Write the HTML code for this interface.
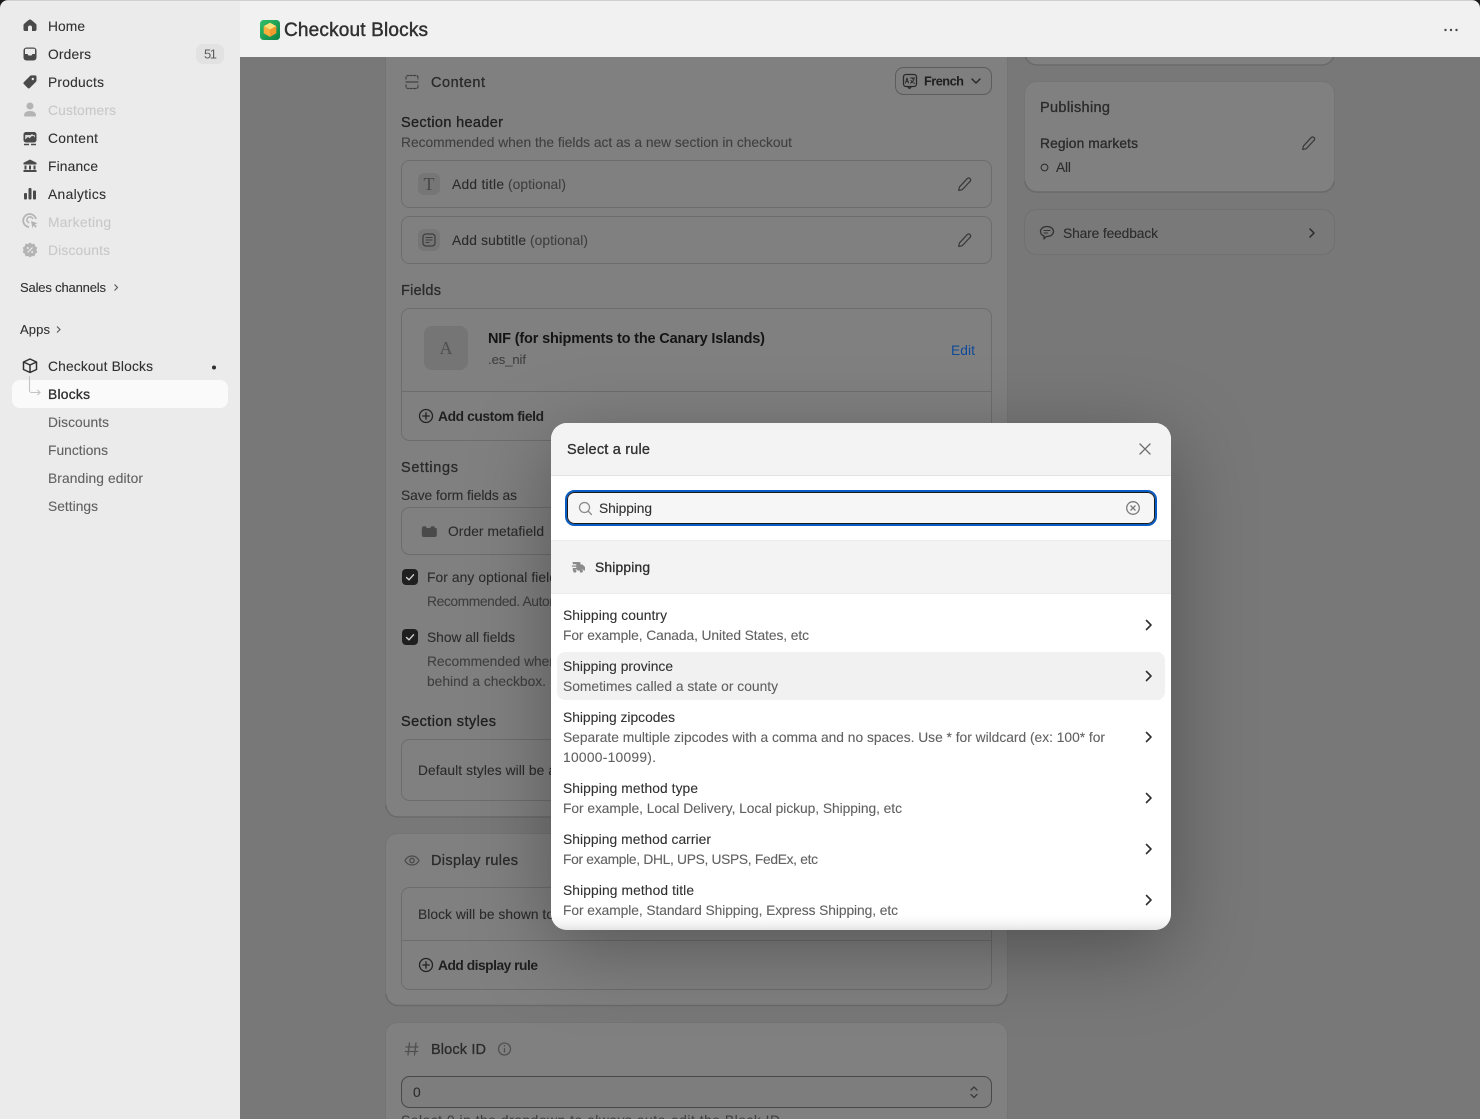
<!DOCTYPE html>
<html><head><meta charset="utf-8"><title>Checkout Blocks</title>
<style>
html,body{margin:0;padding:0;background:#787878;width:1480px;height:1119px;overflow:hidden}
svg{display:block}
text{font-family:"Liberation Sans",Arial,sans-serif;font-size:13.8px;fill:#303030;white-space:pre}
.s{font-size:13px}
.nav{color:#303030;fill:#303030}
.off{fill:#c8c8c8;color:#c8c8c8}
.sub{fill:#616161;color:#616161}
.d1{fill:#1f1f1f;color:#1f1f1f}
.d2{fill:#2b2b2b;color:#2b2b2b}
.d3{fill:#3f3f3f;color:#3f3f3f}
.mo{fill:#303030;color:#303030}
.mg{fill:#616161;color:#616161}
.nav,.off,.sub,.d1,.d2,.d3,.mo,.mg{stroke:currentColor;stroke-width:.1px}
.m{stroke:currentColor;stroke-width:.32px}
.b{font-weight:700;stroke-width:0}
.ic{fill:none;stroke-linecap:round;stroke-linejoin:round}
</style></head><body>
<svg width="1480" height="1119" viewBox="0 0 1480 1119" xmlns="http://www.w3.org/2000/svg">
<defs>
<linearGradient id="lg" x1="0" y1="0" x2="1" y2="1"><stop offset="0" stop-color="#34c16a"/><stop offset="1" stop-color="#0b8043"/></linearGradient>
<linearGradient id="fade" x1="0" y1="0" x2="0" y2="1"><stop offset="0" stop-color="#fff" stop-opacity="0"/><stop offset="1" stop-color="#e4e4e4"/></linearGradient>
<clipPath id="mc"><rect x="551" y="423" width="620" height="507" rx="16"/></clipPath>
</defs>

<!-- backdrop -->
<rect x="240" y="57" width="1240" height="1062" fill="#787878"/>

<!-- Content card -->
<rect x="385.500" y="30" width="622" height="787" rx="12" fill="#808080" stroke="#747474"/>
<path d="M386 805a12 12 0 0 0 12 12h597a12 12 0 0 0 12-12" fill="none" stroke="#6a6a6a" stroke-width="1.500"/>

<!-- Right cards -->
<rect x="1024.500" y="20" width="310" height="45" rx="12" fill="#808080" stroke="#747474"/>
<path d="M1025 54a12 12 0 0 0 12 11h285a12 12 0 0 0 12-11" fill="none" stroke="#6a6a6a" stroke-width="1.500"/>
<rect x="1024.500" y="81.500" width="310" height="111" rx="12" fill="#808080" stroke="#747474"/>
<path d="M1025 181a12 12 0 0 0 12 11h285a12 12 0 0 0 12-11" fill="none" stroke="#6a6a6a" stroke-width="1.500"/>
<rect x="1024.500" y="209.500" width="310" height="45" rx="12" fill="#797979" stroke="#707070"/>

<!-- Display rules card -->
<rect x="385.500" y="833.500" width="622" height="172" rx="12" fill="#808080" stroke="#747474"/>
<path d="M386 994a12 12 0 0 0 12 11.500h597a12 12 0 0 0 12-11.500" fill="none" stroke="#6a6a6a" stroke-width="1.500"/>
<!-- Block ID card -->
<rect x="385.500" y="1022.500" width="622" height="130" rx="12" fill="#808080" stroke="#747474"/>

<!-- inner boxes -->
<g fill="none" stroke="#6d6d6d">
<rect x="401.500" y="160.500" width="590" height="47" rx="8"/>
<rect x="401.500" y="216.500" width="590" height="47" rx="8"/>
<rect x="401.500" y="308.500" width="590" height="132" rx="8"/>
<path d="M402 391.500h589"/>
<rect x="401.500" y="507.500" width="590" height="47" rx="8"/>
<rect x="401.500" y="739.500" width="590" height="61" rx="8"/>
<rect x="401.500" y="887.500" width="590" height="102" rx="8"/>
<path d="M402 940.500h589"/>
</g>
<rect x="401.500" y="1076.500" width="590" height="31" rx="8" fill="#7d7d7d" stroke="#484848"/>
<rect x="895.500" y="67.500" width="96" height="27" rx="8" fill="#7f7f7f" stroke="#5c5c5c"/>

<!-- Content card text -->
<text x="431" y="87" textLength="54" class="m d2" style="font-size:14.500px">Content</text>
<text x="401" y="127" textLength="102" class="m d1" style="font-size:14.500px">Section header</text>
<text x="401" y="147" textLength="391" class="d3">Recommended when the fields act as a new section in checkout</text>
<text x="452" y="189" textLength="52" class="d2">Add title</text>
<text x="508" y="189" textLength="58" class="d3">(optional)</text>
<text x="452" y="245" textLength="74" class="d2">Add subtitle</text>
<text x="530" y="245" textLength="58" class="d3">(optional)</text>
<text x="401" y="295" textLength="40" class="m d2" style="font-size:14.500px">Fields</text>
<rect x="424" y="326" width="44" height="44" rx="8" fill="#757575"/>
<text x="446" y="354" text-anchor="middle" style="font-family:'Liberation Serif',serif;font-size:18px;fill:#4f4f4f">A</text>
<text x="488" y="343" textLength="277" class="b" style="font-size:14.500px;fill:#141414">NIF (for shipments to the Canary Islands)</text>
<text x="488" y="364" textLength="38" class="s d3">.es_nif</text>
<text x="951" y="355" textLength="24" style="fill:#0f4a99">Edit</text>
<text x="438" y="421" textLength="106" class="d1 b">Add custom field</text>
<text x="401" y="472" textLength="57" class="m d2" style="font-size:14.500px">Settings</text>
<text x="401" y="500" textLength="116" class="d2">Save form fields as</text>
<text x="448" y="536" textLength="96" class="d2">Order metafield</text>
<text x="427" y="582" textLength="130" class="d2">For any optional field</text>
<text x="427" y="606" textLength="130" class="d3">Recommended. Auton</text>
<text x="427" y="642" textLength="88" class="d2">Show all fields</text>
<text x="427" y="666" textLength="130" class="d3">Recommended when</text>
<text x="427" y="686" textLength="119" class="d3">behind a checkbox.</text>
<text x="401" y="726" textLength="95" class="m d1" style="font-size:14.500px">Section styles</text>
<text x="418" y="775" textLength="138" class="d2">Default styles will be a</text>
<text x="431" y="865" textLength="87" class="m d2" style="font-size:14.500px">Display rules</text>
<text x="418" y="919" textLength="136" class="d2">Block will be shown to</text>
<text x="438" y="970" textLength="100" class="d1 b">Add display rule</text>
<text x="431" y="1054" textLength="55" class="m d2" style="font-size:14.500px">Block ID</text>
<text x="413" y="1097" class="d2">0</text>
<text x="401" y="1125" textLength="379" class="d3">Select 0 in the dropdown to always auto-edit the Block ID</text>
<text x="924" y="85.500" textLength="40" class="d1 b" style="font-size:12.800px">French</text>

<!-- Right text -->
<text x="1040" y="112" textLength="70" class="m d2" style="font-size:14.500px">Publishing</text>
<text x="1040" y="148" textLength="98" class="m d2">Region markets</text>
<text x="1056" y="172" textLength="15" class="d2">All</text>
<text x="1063" y="238" textLength="95" class="d2">Share feedback</text>

<!-- Main icons -->
<g class="ic" stroke="#404040" stroke-width="1.300">
 <path d="M406 82h12" stroke-width="1.200"/>
 <path d="M406 85v1.500a2 2 0 0 0 2 2h8a2 2 0 0 0 2-2v-1.500M406 79v-1.500a2 2 0 0 1 2-2h8a2 2 0 0 1 2 2v1.500" stroke-dasharray="2 1.400" stroke-width="1.200"/>
 <rect x="903.500" y="74.500" width="13" height="12" rx="2.500" stroke="#2a2a2a"/>
 <path d="M908 87l1.500 1.500 1.500-1.500" stroke="#2a2a2a"/>
 <path d="M905.500 83l1.500-5 1.500 5M906 81.500h2M910.500 78h4M912.500 78v1M914 79c-.5 2-2 3.500-3.500 4M911 80.500c.8 1.300 2 2.300 3.500 2.800" stroke="#2a2a2a" stroke-width="1"/>
 <path d="M972 79l4 4 4-4" stroke="#2a2a2a" stroke-width="1.500"/>
 <path d="M958.700 190.500l.8-3.600 7.800-8.400a2 2 0 0 1 3 2.600l-7.900 8.500z" stroke="#3c3c3c"/>
 <path d="M958.700 246.500l.8-3.600 7.800-8.400a2 2 0 0 1 3 2.600l-7.900 8.500z" stroke="#3c3c3c"/>
 <path d="M1302.700 149.500l.8-3.600 7.800-8.400a2 2 0 0 1 3 2.600l-7.900 8.500z" stroke="#3c3c3c"/>
 <circle cx="426" cy="416" r="6.500" stroke="#222"/>
 <path d="M426 412.800v6.400M422.800 416h6.400" stroke="#222"/>
 <circle cx="426" cy="965" r="6.500" stroke="#222"/>
 <path d="M426 961.800v6.400M422.800 965h6.400" stroke="#222"/>
 <path d="M405 860.500c1.500-3 4-4.500 7-4.500s5.500 1.500 7 4.500c-1.500 3-4 4.500-7 4.500s-5.500-1.500-7-4.500z" stroke="#4a4a4a"/>
 <circle cx="412" cy="860.500" r="2.200" stroke="#4a4a4a"/>
 <path d="M409.500 1043l-1.500 12M416 1043l-1.500 12M406 1047h12M405.500 1051.500h12" stroke="#4f4f4f"/>
 <circle cx="504.500" cy="1049" r="6" stroke="#505050"/>
 <path d="M504.500 1048.500v3.500" stroke="#505050"/>
 <path d="M971 1090l3-3 3 3M971 1094.500l3 3 3-3" stroke="#3a3a3a"/>
 <path d="M1047 226.500c3.900 0 6.500 2.300 6.500 5s-2.600 5-6.500 5h-.8l-2.200 2.500v-3c-2.200-.8-3.500-2.500-3.500-4.500 0-2.700 2.600-5 6.500-5z" stroke="#333"/>
 <path d="M1044 230.500h6M1044 233h3.500" stroke="#333" stroke-width="1.100"/>
 <path d="M1310 229l4 4-4 4" stroke="#2a2a2a" stroke-width="1.500"/>
</g>
<circle cx="1044.500" cy="167.500" r="3.400" fill="none" stroke="#2a2a2a" stroke-width="1"/>
<circle cx="504.500" cy="1045.800" r=".8" fill="#505050"/>

<rect x="418" y="173" width="22" height="22" rx="6" fill="#767676"/>
<text x="429" y="190" text-anchor="middle" style="font-family:'Liberation Serif',serif;font-size:18px;fill:#484848">T</text>
<rect x="418" y="229" width="22" height="22" rx="6" fill="#767676"/>
<rect x="423" y="234" width="12" height="12" rx="3" fill="none" stroke="#3f3f3f" stroke-width="1.300"/>
<path d="M425.500 237.500h7M425.500 240h7M425.500 242.500h4" stroke="#3f3f3f" stroke-width="1.100"/>

<path d="M422 528a1.800 1.800 0 0 1 1.800-1.800h1a1.800 1.800 0 0 1 1.800 1.800h3.800a1.800 1.800 0 0 1 1.800-1.800h1a1.800 1.800 0 0 1 1.800 1.800h.8a1 1 0 0 1 1 1v6a2 2 0 0 1-2 2h-11a2 2 0 0 1-2-2v-6a1 1 0 0 1 1-1z" fill="#4a4a4a"/>

<rect x="402" y="569" width="16" height="16" rx="4" fill="#1f1f1f"/>
<path d="M406.500 577.500l2.500 2.300 4.500-5" fill="none" stroke="#d0d0d0" stroke-width="1.400" stroke-linecap="round" stroke-linejoin="round"/>
<rect x="402" y="629" width="16" height="16" rx="4" fill="#1f1f1f"/>
<path d="M406.500 637.500l2.500 2.300 4.500-5" fill="none" stroke="#d0d0d0" stroke-width="1.400" stroke-linecap="round" stroke-linejoin="round"/>

<!-- Sidebar -->
<rect x="0" y="0" width="240" height="1119" fill="#ebebeb"/>
<!-- Top bar -->
<rect x="240" y="0" width="1240" height="57" fill="#f1f1f1"/>
<rect x="0" y="0" width="1480" height="1" fill="#d0d0d0"/>
<path d="M0 0h8a8 8 0 0 0-8 8z" fill="#1a1a1a"/>
<path d="M1480 0h-8a8 8 0 0 1 8 8z" fill="#1a1a1a"/>

<rect x="260" y="20" width="20" height="20" rx="3.500" fill="url(#lg)"/>
<path d="M270 22.700l6.300 3.400-6.300 3.500-6.300-3.500z" fill="#ffdf7c"/>
<path d="M263.700 26.100l6.300 3.500v7.300l-6.300-3.600z" fill="#f9ae3d"/>
<path d="M276.300 26.100l-6.300 3.500v7.300l6.300-3.600z" fill="#f2992e"/>
<text x="284" y="36" textLength="144" class="m" style="font-size:19px;fill:#303030;color:#303030;stroke-width:.45px">Checkout Blocks</text>
<circle cx="1445.500" cy="30" r="1.200" fill="#4a4a4a"/><circle cx="1451" cy="30" r="1.200" fill="#4a4a4a"/><circle cx="1456.500" cy="30" r="1.200" fill="#4a4a4a"/>

<text x="48" y="31" textLength="37" class="nav">Home</text>
<text x="48" y="59" textLength="43" class="nav">Orders</text>
<text x="48" y="87" textLength="56" class="nav">Products</text>
<text x="48" y="115" textLength="68" class="off">Customers</text>
<text x="48" y="143" textLength="50" class="nav">Content</text>
<text x="48" y="171" textLength="50" class="nav">Finance</text>
<text x="48" y="199" textLength="58" class="nav">Analytics</text>
<text x="48" y="227" textLength="63" class="off">Marketing</text>
<text x="48" y="255" textLength="62" class="off">Discounts</text>
<rect x="196" y="44" width="28" height="20" rx="7" fill="#e2e2e2"/>
<text x="204" y="58.500" textLength="13" class="s" style="fill:#5c5c5c">51</text>

<text x="20" y="292" textLength="86" class="s nav">Sales channels</text>
<path d="M114.500 284.500l3 3-3 3" fill="none" stroke="#555" stroke-width="1.100"/>
<text x="20" y="334" textLength="30" class="s nav">Apps</text>
<path d="M57 326.500l3 3-3 3" fill="none" stroke="#555" stroke-width="1.100"/>

<rect x="12" y="380" width="216" height="28" rx="8" fill="#fafafa"/>
<text x="48" y="371" textLength="105" class="nav">Checkout Blocks</text>
<circle cx="214" cy="367.500" r="2" fill="#303030"/>
<path d="M30 359l6.500 3v7.500l-6.500 3-6.500-3v-7.500zM23.500 362l6.500 3 6.500-3M30 365v7.500" fill="none" stroke="#303030" stroke-width="1.500" stroke-linejoin="round"/>
<path d="M29.500 376v14.500a2 2 0 0 0 2 2h8.500M37.500 390l2.500 2.500-2.500 2.500" fill="none" stroke="#c4c4c4" stroke-width="1.100"/>
<text x="48" y="399" textLength="42" class="m nav">Blocks</text>
<text x="48" y="427" textLength="61" class="sub">Discounts</text>
<text x="48" y="455" textLength="60" class="sub">Functions</text>
<text x="48" y="483" textLength="95" class="sub">Branding editor</text>
<text x="48" y="511" textLength="50" class="sub">Settings</text>

<!-- sidebar icons -->
<path d="M30 19.500c-.9 0-1.500.5-5.800 4.200-.5.400-.7.900-.7 1.500v4.300c0 1 .7 1.500 1.500 1.500H28v-3.500a2 2 0 0 1 4 0V31h3c.8 0 1.500-.5 1.500-1.500v-4.300c0-.6-.2-1.100-.7-1.500-4.300-3.700-4.900-4.200-5.800-4.200z" fill="#4a4a4a"/>
<rect x="23.500" y="47.500" width="13" height="13" rx="3" fill="#4a4a4a"/>
<path d="M25 49.500a.8.8 0 0 1 .8-.8h8.400a.8.8 0 0 1 .8.8v4.500h-2.500l-1 1.500h-3l-1-1.500H25z" fill="#ebebeb"/>
<path d="M24 82l6-6a2 2 0 0 1 1.400-.6H35a1.500 1.500 0 0 1 1.500 1.500v3.600a2 2 0 0 1-.6 1.400l-6 6a1.600 1.600 0 0 1-2.300 0L24 84.300a1.600 1.600 0 0 1 0-2.300z" fill="#4a4a4a"/>
<circle cx="32.800" cy="79" r="1.200" fill="#ebebeb"/>
<circle cx="30" cy="106" r="3.500" fill="#b4b4b4"/><path d="M24 115.500c0-3 2.500-4.500 6-4.500s6 1.500 6 4.500a1 1 0 0 1-1 1H25a1 1 0 0 1-1-1z" fill="#b4b4b4"/>
<rect x="23.500" y="132" width="13" height="10.500" rx="2.500" fill="#4a4a4a"/>
<path d="M25.200 139.500l2.800-2.500 1.800 1.200 2.700-3.200 2.300 2.500v-2.500h-9.600z" fill="#ebebeb" opacity=".9"/>
<circle cx="32" cy="135.200" r="1" fill="#ebebeb"/>
<path d="M24 144.500h5M31 144.500h5" stroke="#4a4a4a" stroke-width="1.400"/>
<path d="M30 159.500l6.500 3.300v1.700h-13v-1.700zM24.500 165.500h2v4h-2zM29 165.500h2v4h-2zM33.500 165.500h2v4h-2zM23.500 170h13v2h-13z" fill="#4a4a4a"/>
<rect x="24" y="193" width="3" height="6.500" rx="1" fill="#4a4a4a"/><rect x="28.500" y="188" width="3" height="11.500" rx="1" fill="#4a4a4a"/><rect x="33" y="190.500" width="3" height="9" rx="1" fill="#4a4a4a"/>
<path d="M36 219a6.500 6.500 0 1 0-7 8" fill="none" stroke="#b4b4b4" stroke-width="1.700"/>
<path d="M32.800 219a3 3 0 1 0-3.500 3.800" fill="none" stroke="#b4b4b4" stroke-width="1.500"/>
<path d="M31 221l6.500 2.300-2.700 1.100 2 2-1.200 1.200-2-2-1.100 2.600z" fill="#b4b4b4"/>
<path d="M30 242.500l2 1.500 2.500-.2.700 2.400 2.100 1.400-.9 2.400.9 2.400-2.100 1.400-.7 2.400-2.500-.2-2 1.500-2-1.500-2.500.2-.7-2.400-2.100-1.400.9-2.400-.9-2.400 2.100-1.400.7-2.400 2.500.2z" fill="#b4b4b4"/>
<path d="M27.500 252.500l5-5" stroke="#ebebeb" stroke-width="1.200"/><circle cx="27.800" cy="248" r="1" fill="#ebebeb"/><circle cx="32.200" cy="252" r="1" fill="#ebebeb"/>

<!-- Modal -->
<rect x="551" y="423" width="620" height="507" rx="16" fill="#fff" style="filter:drop-shadow(0 20px 40px rgba(0,0,0,.32))"/>
<g clip-path="url(#mc)">
<rect x="551" y="423" width="620" height="52" fill="#f3f3f3"/>
<rect x="551" y="475" width="620" height="1" fill="#e3e3e3"/>
<rect x="551" y="540" width="620" height="54" fill="#f3f3f3"/>
<rect x="551" y="540" width="620" height="1" fill="#ebebeb"/>
<rect x="551" y="593" width="620" height="1" fill="#ebebeb"/>
<rect x="557" y="652" width="608" height="48" rx="8" fill="#f1f1f1"/>
<rect x="551" y="912" width="620" height="18" fill="url(#fade)"/>
</g>
<text x="567" y="454" textLength="83" class="m mo" style="font-size:14.500px">Select a rule</text>
<path d="M1140 444l10 10M1150 444l-10 10" stroke="#6b6b6b" stroke-width="1.300" stroke-linecap="round"/>
<rect x="566" y="491" width="590" height="34" rx="8.500" fill="#fdfdfd" stroke="#0a5cc5" stroke-width="2"/>
<rect x="567.500" y="492.500" width="587" height="31" rx="7" fill="#f6f6f6" stroke="#1a1a1a" stroke-width="1"/>
<circle cx="584.500" cy="507.500" r="5" fill="none" stroke="#8a8a8a" stroke-width="1.300"/>
<path d="M588.200 511.200l3.300 3.300" stroke="#8a8a8a" stroke-width="1.300" stroke-linecap="round"/>
<text x="599" y="513" textLength="53" class="mo">Shipping</text>
<circle cx="1133" cy="508" r="6.300" fill="none" stroke="#7a7a7a" stroke-width="1.300"/>
<path d="M1130.500 505.500l5 5M1135.500 505.500l-5 5" stroke="#7a7a7a" stroke-width="1.300"/>
<path d="M572.500 562h7a1 1 0 0 1 1 1v1.500h2l2.500 2.500v3.500h-1.300a2 2 0 0 0-3.700 0h-2.500a2 2 0 0 0-3.700 0h-1v-2.500h3.500v-1.200h-4.500v-1.300h4.500v-1.200h-3.300z" fill="#8a8a8a"/>
<circle cx="574.800" cy="571" r="1.600" fill="#8a8a8a"/><circle cx="581.300" cy="571" r="1.600" fill="#8a8a8a"/>
<text x="595" y="572" textLength="55" class="m mo">Shipping</text>

<text x="563" y="620" textLength="104" class="mo">Shipping country</text>
<text x="563" y="640" textLength="246" class="mg">For example, Canada, United States, etc</text>
<text x="563" y="671" textLength="110" class="mo">Shipping province</text>
<text x="563" y="691" textLength="215" class="mg">Sometimes called a state or county</text>
<text x="563" y="722" textLength="112" class="mo">Shipping zipcodes</text>
<text x="563" y="742" textLength="542" class="mg">Separate multiple zipcodes with a comma and no spaces. Use * for wildcard (ex: 100* for</text>
<text x="563" y="762" textLength="93" class="mg">10000-10099).</text>
<text x="563" y="793" textLength="135" class="mo">Shipping method type</text>
<text x="563" y="813" textLength="339" class="mg">For example, Local Delivery, Local pickup, Shipping, etc</text>
<text x="563" y="844" textLength="148" class="mo">Shipping method carrier</text>
<text x="563" y="864" textLength="255" class="mg">For example, DHL, UPS, USPS, FedEx, etc</text>
<text x="563" y="895" textLength="131" class="mo">Shipping method title</text>
<text x="563" y="915" textLength="335" class="mg">For example, Standard Shipping, Express Shipping, etc</text>

<g fill="none" stroke="#303030" stroke-width="1.600" stroke-linecap="round" stroke-linejoin="round">
<path d="M1146.500 620.500l4.500 4.500-4.500 4.500"/>
<path d="M1146.500 671.500l4.500 4.500-4.500 4.500"/>
<path d="M1146.500 732.500l4.500 4.500-4.500 4.500"/>
<path d="M1146.500 793.500l4.500 4.500-4.500 4.500"/>
<path d="M1146.500 844.500l4.500 4.500-4.500 4.500"/>
<path d="M1146.500 895.500l4.500 4.500-4.500 4.500"/>
</g>
</svg>
</body></html>
